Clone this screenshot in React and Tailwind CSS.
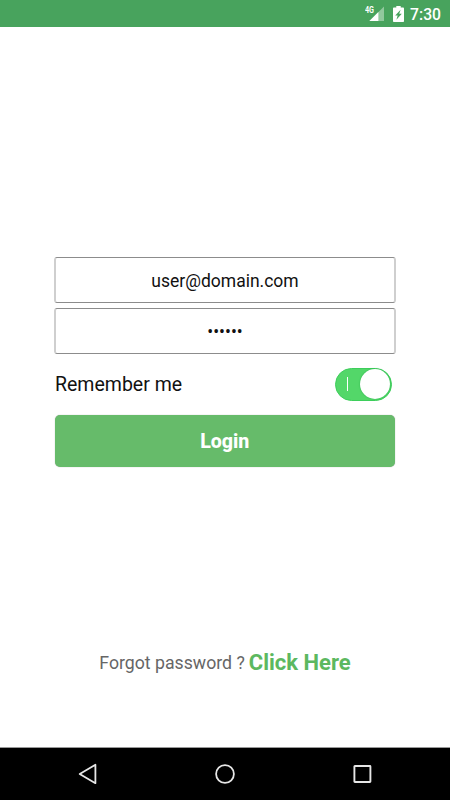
import React, { useState } from "react";

function SignalIcon() {
  return (
    <svg width="19" height="16" viewBox="0 0 19 16" className="block">
      <path d="M19 0.4V15H4.4Z" fill="#fff" fillOpacity="0.4" />
      <path d="M13.4 6V15H4.4Z" fill="#fff" />
      <text
        x="0"
        y="6.6"
        fill="#fff"
        fontSize="8.8"
        fontWeight="700"
        textLength="9"
        lengthAdjust="spacingAndGlyphs"
      >
        4G
      </text>
    </svg>
  );
}

function BatteryIcon() {
  return (
    <svg width="11" height="16" viewBox="0 0 11 16" className="block">
      <path
        fill="#fff"
        fillRule="evenodd"
        d="M3.3 0H7.7V1.6H10.2Q11 1.6 11 2.4V15.2Q11 16 10.2 16H0.8Q0 16 0 15.2V2.4Q0 1.6 0.8 1.6H3.3ZM7.6 3.7L2.2 9.6H4.7L3.4 13.8L8.8 7.8H6.2Z"
      />
    </svg>
  );
}

function StatusBar() {
  return (
    <header className="flex h-[27px] items-center justify-end bg-[#48a35d] pt-px pr-[9px]">
      <SignalIcon />
      <div className="mr-[6.5px] ml-[9px]">
        <BatteryIcon />
      </div>
      <span className="pt-px text-[15.7px] leading-[26px] font-medium text-white">7:30</span>
    </header>
  );
}

function NavBar() {
  return (
    <nav className="flex h-[53px] items-center border-t border-[#999] bg-black px-[19px]">
      <button type="button" aria-label="Back" className="flex flex-1 justify-center">
        <svg width="20" height="22" viewBox="0 0 20 22" fill="none" stroke="#e6e6e6" strokeWidth="1.8">
          <path d="M17.4 1.8V20.2L1.7 11Z" strokeLinejoin="round" />
        </svg>
      </button>
      <button type="button" aria-label="Home" className="flex flex-1 justify-center">
        <svg width="22" height="22" viewBox="0 0 22 22" fill="none" stroke="#e6e6e6" strokeWidth="1.8">
          <circle cx="11" cy="11" r="8.9" />
        </svg>
      </button>
      <button type="button" aria-label="Recent apps" className="flex flex-1 justify-center">
        <svg width="20" height="20" viewBox="0 0 20 20" fill="none" stroke="#e6e6e6" strokeWidth="1.9">
          <rect x="2.4" y="2" width="16" height="16" rx="0.5" />
        </svg>
      </button>
    </nav>
  );
}

function App() {
  const [email, setEmail] = useState("user@domain.com");
  const [password, setPassword] = useState("secret");
  const [remember, setRemember] = useState(true);

  return (
    <div className="flex h-[800px] w-[450px] flex-col overflow-hidden bg-white font-[Roboto,sans-serif]">
      <StatusBar />
      <main className="flex flex-1 flex-col">
        <form className="mx-[54px] mt-[230px] flex flex-col" onSubmit={(e) => e.preventDefault()}>
          <input
            type="text"
            value={email}
            onChange={(e) => setEmail(e.target.value)}
            className="h-[46px] w-full rounded-[3px] border-x-2 border-y border-x-[#cfcfcf] border-y-[#8c8c8c] pt-[2px] text-center text-[17.5px] text-[#111] outline-none"
          />
          <input
            type="password"
            value={password}
            onChange={(e) => setPassword(e.target.value)}
            className="mt-[5px] h-[46px] w-full rounded-[3px] border-x-2 border-y border-x-[#cfcfcf] border-y-[#8c8c8c] pt-[2px] text-center text-[17.5px] text-[#111] outline-none"
          />
          <div className="mt-[13px] flex h-[34px] items-center justify-between pr-[4px] pl-px">
            <span className="pt-[2px] text-[19.5px] text-[#111]">Remember me</span>
            <button
              type="button"
              role="switch"
              aria-checked={remember}
              aria-label="Remember me"
              onClick={() => setRemember(!remember)}
              className={`flex h-[33px] w-[57px] items-center rounded-full border border-[#3dce5b] pr-px ${
                remember ? "justify-between bg-[#53d769] pl-[11px]" : "justify-end bg-gray-300"
              }`}
            >
              <span className="h-[14px] w-px bg-white" />
              <span className="size-[30px] rounded-full bg-white shadow-[0_0_1.5px_#1caa40]" />
            </button>
          </div>
          <button
            type="submit"
            className="mr-px ml-[0.5px] mt-[13.5px] h-[52.5px] rounded-[5px] bg-[#66bb6a] pt-[2px] text-[19.6px] font-extrabold text-white shadow-[0_0_1px_#999]"
          >
            Login
          </button>
        </form>
        <p className="mt-auto mb-[67px] flex items-center justify-center gap-1 leading-[34px]">
          <span className="text-[17.7px] text-[#666]">Forgot password ?</span>
          <a href="#" className="text-[22px] font-bold text-[#5cb860]">
            Click Here
          </a>
        </p>
      </main>
      <NavBar />
    </div>
  );
}

export default App;
